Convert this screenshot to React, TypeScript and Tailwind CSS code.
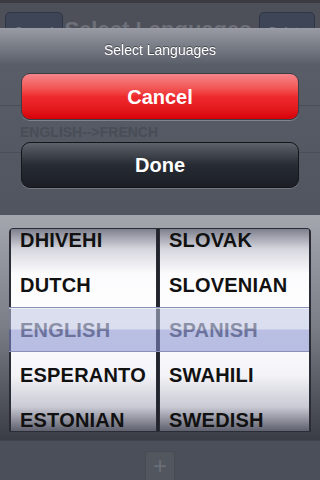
import React from "react"

const left = ["DHIVEHI", "DUTCH", "ENGLISH", "ESPERANTO", "ESTONIAN"]
const right = ["SLOVAK", "SLOVENIAN", "SPANISH", "SWAHILI", "SWEDISH"]

const Wheel = ({ items, w }: { items: string[]; w: string }) => (
  <div className={`relative ${w} h-full overflow-hidden bg-[linear-gradient(to_bottom,#7e808e_0%,#d6d7de_10%,#fbfbfd_22%,#ffffff_45%,#f4f4f8_72%,#c9cad4_88%,#5e606e_100%)] border-x border-[#2a2c36]`}>
    <div className="relative flex flex-col -mt-[12px]">
      {items.map((t, i) => (
        <div
          key={t}
          className={`h-[45px] flex items-center pl-[9px] text-[20px] font-bold tracking-[0.2px] ${i === 2 ? "text-[#4e5260]" : "text-[#111]"}`}
        >
          {t}
        </div>
      ))}
    </div>
  </div>
)

export default function App() {
  return (
    <div className="w-[320px] h-[480px] overflow-hidden flex flex-col bg-[#4c5059] font-['Liberation_Sans',Arial,sans-serif]">
      {/* dimmed nav bar behind */}
      <div className="h-[28px] shrink-0 overflow-hidden bg-[#4d5059] border-t-[3px] border-[#3a3c42] relative">
        <div className="flex items-start justify-between px-[5px] pt-[9px]">
          <div className="w-[58px] h-[28px] rounded-[5px] border border-[#2e3544] bg-[#3e4556] text-[#6c7280] text-[12px] font-bold text-center pt-[10px]">Cancel</div>
          <div className="text-[#6d7079] text-[22px] font-bold pt-[1px] -ml-[6px]">Select Languages</div>
          <div className="w-[56px] h-[28px] rounded-[5px] border border-[#2e3544] bg-[#3e4556] text-[#6c7280] text-[12px] font-bold text-center pt-[10px]">Delete</div>
        </div>
      </div>

      {/* action sheet */}
      <div className="relative h-[187px] shrink-0 bg-gradient-to-b from-[#999ca4] via-[#585d68] via-20% to-[#50555f]">
        <div className="absolute left-0 right-0 top-[77px] h-px bg-[#4a4e57]" />
        <div className="absolute left-0 right-0 top-[124px] h-px bg-[#4a4e57]" />
        <div className="absolute left-[20px] top-[94px] text-[#494d56] text-[14px] font-bold">ENGLISH--&gt;FRENCH</div>
        <div className="relative flex flex-col items-center">
          <div className="pt-[12px] h-[45px] text-white text-[14px] drop-shadow-[0_-1px_0_rgba(0,0,0,0.4)]">Select Languages</div>
          <div className="w-[278px] h-[47px] rounded-[9px] border border-[#3a3d45] bg-gradient-to-b from-[#f5858b] via-[#ef2a2f] via-50% to-[#d80006] flex items-center justify-center text-white text-[20px] font-bold shadow-[0_1px_0_rgba(255,255,255,0.25)]">
            Cancel
          </div>
          <div className="mt-[22px] w-[278px] h-[46px] rounded-[9px] border border-[#14161b] bg-gradient-to-b from-[#5d626c] via-[#272b33] via-50% to-[#1b1e25] flex items-center justify-center text-white text-[20px] font-bold shadow-[0_1px_0_rgba(255,255,255,0.2)]">
            Done
          </div>
        </div>
      </div>

      {/* picker */}
      <div className="relative h-[225px] shrink-0 bg-gradient-to-b from-[#a4a7ae] via-[#7a7d86] to-[#3a3d46] pt-[13px] px-[9px] pb-[8px]">
        <div className="flex h-full gap-[2px] bg-[#22242c] border border-[#2a2c36] rounded-t-[4px] overflow-hidden">
          <Wheel items={left} w="w-[147px]" />
          <Wheel items={right} w="flex-1" />
        </div>
        <div className="absolute left-[9px] right-[11px] top-[92px] h-[45px] border-y border-[#8a90b8] bg-[linear-gradient(to_bottom,rgba(190,196,225,0.55)_0%,rgba(190,196,225,0.55)_48%,rgba(130,140,205,0.55)_52%,rgba(130,140,205,0.55)_100%)] shadow-[inset_0_1px_0_rgba(255,255,255,0.5)]" />
      </div>

      {/* bottom toolbar behind */}
      <div className="flex-1 bg-[#4b4f59] border-t border-[#3f434b] flex justify-center pt-[10px]">
        <div className="w-[30px] h-[30px] rounded-t-[3px] bg-[#52565f] border border-[#474b53] text-[#6a6e77] text-[24px] leading-[28px] text-center">+</div>
      </div>
    </div>
  )
}
